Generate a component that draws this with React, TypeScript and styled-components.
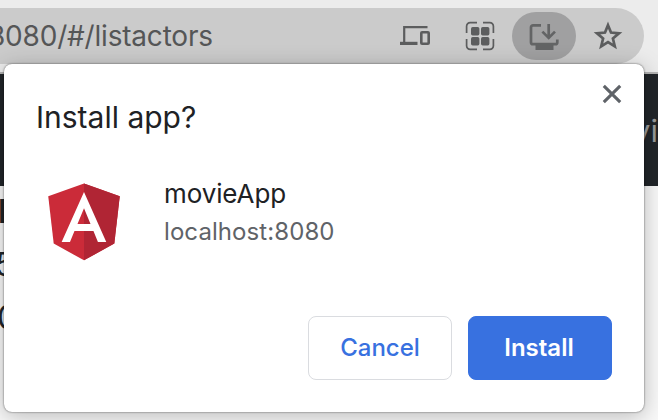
import React from "react";
import styled, { createGlobalStyle } from "styled-components";

const GlobalStyle = createGlobalStyle`
  * { box-sizing: border-box; }
  body { margin: 0; overflow: hidden; font-family: Inter, "Liberation Sans", sans-serif; }
`;

const Screen = styled.div`
  position: relative;
  display: flex;
  flex-direction: column;
  width: 658px;
  height: 420px;
  overflow: hidden;
  background: #f8f8f8;
`;

const Toolbar = styled.header`
  flex: none;
  height: 74px;
  padding: 8px 14px 8px 0;
  background: #ececec;
  border-bottom: 2px solid #b2b2b2;
`;

const AddressBar = styled.div`
  display: flex;
  align-items: center;
  height: 56px;
  padding-right: 4px;
  border-radius: 0 28px 28px 0;
  background: #cbcbcb;
  color: #5c5d5e;
`;

const Url = styled.span`
  flex: 1;
  margin-left: -12px;
  color: #555657;
  font-size: 28px;
  line-height: 57px;
  letter-spacing: -0.2px;
  white-space: nowrap;
`;

const IconSlot = styled.span<{ $width: number; $active?: boolean }>`
  display: flex;
  flex: none;
  align-items: center;
  justify-content: center;
  width: ${(p) => p.$width}px;
  height: 48px;
  border-radius: 24px;
  background: ${(p) => (p.$active ? "#a0a0a1" : "transparent")};
  color: ${(p) => (p.$active ? "#636465" : "inherit")};
`;

const NavBar = styled.nav`
  display: flex;
  flex: none;
  justify-content: flex-end;
  height: 112px;
  background: #212529;
  overflow: hidden;
`;

const NavLink = styled.span`
  width: 71px;
  color: #98999a;
  font-size: 31px;
  line-height: 114px;
  white-space: nowrap;
`;

const Rows = styled.main`
  display: flex;
  flex-direction: column;
  margin-top: -1px;
  color: #212529;
`;

const Row = styled.div<{ $bold?: boolean; $shift: number }>`
  height: 53px;
  margin-left: ${(p) => p.$shift}px;
  font-size: 32px;
  font-weight: ${(p) => (p.$bold ? 700 : 400)};
  line-height: 53px;
`;

const Dialog = styled.section`
  position: absolute;
  top: 64px;
  left: 4px;
  display: flex;
  flex-direction: column;
  width: 640px;
  height: 348px;
  padding: 14px 32px 32px;
  border-radius: 8px;
  background: #fff;
  box-shadow: 0 0 2px rgba(0, 0, 0, 0.65), 0 4px 22px rgba(0, 0, 0, 0.25);
`;

const DialogHeader = styled.div`
  display: flex;
  align-items: flex-start;
  justify-content: space-between;
  height: 94px;
`;

const Title = styled.h1`
  margin: 19px 0 0;
  color: #202124;
  font-size: 30px;
  font-weight: 400;
  line-height: 40px;
  letter-spacing: 0;
`;

const CloseButton = styled.button`
  display: flex;
  margin-right: -10px;
  padding: 6px 0;
  border: 0;
  background: none;
  color: #5f6368;
`;

const AppInfo = styled.div`
  display: flex;
  gap: 32px;
  height: 96px;
`;

const AppText = styled.div`
  padding-top: 3px;
`;

const AppName = styled.div`
  color: #202124;
  font-size: 26px;
  line-height: 38px;
  letter-spacing: -0.1px;
`;

const Origin = styled.div`
  color: #5f6368;
  font-size: 24px;
  line-height: 38px;
  letter-spacing: 0.08px;
`;

const Actions = styled.div`
  display: flex;
  justify-content: flex-end;
  gap: 16px;
  margin-top: auto;
`;

const Button = styled.button<{ $primary?: boolean }>`
  width: 144px;
  height: 64px;
  padding: ${(p) => (p.$primary ? "0 2px 0 0" : "0")};
  border: 1px solid ${(p) => (p.$primary ? "#3871e0" : "#dadce0")};
  border-radius: 8px;
  background: ${(p) => (p.$primary ? "#3871e0" : "#fff")};
  color: ${(p) => (p.$primary ? "#fff" : "#3871e0")};
  font: ${(p) => (p.$primary ? 600 : 500)} 24px/62px Inter, "Liberation Sans", sans-serif;
`;

const DevicesIcon = () => (
  <svg width="30" height="20" viewBox="0 0 30 20" fill="none" stroke="currentColor">
    <path d="M27.5 1.2H4.2V17" strokeWidth="2.2" />
    <path d="M0 17.4H17.5" strokeWidth="3.2" />
    <rect x="21.3" y="6.3" width="7.4" height="11.4" rx="0.8" strokeWidth="2.6" />
  </svg>
);

const GridIcon = () => (
  <svg width="30" height="30" viewBox="0 0 30 30">
    <path
      d="M1.6 12V5.2a3.6 3.6 0 0 1 3.6-3.6H12M18 1.6h6.8a3.6 3.6 0 0 1 3.6 3.6V12M28.4 18v6.8a3.6 3.6 0 0 1-3.6 3.6H18M12 28.4H5.2a3.6 3.6 0 0 1-3.6-3.6V18"
      fill="none"
      stroke="currentColor"
      strokeWidth="1.7"
    />
    <g fill="currentColor">
      <rect x="6" y="6" width="8.4" height="8.4" rx="1.7" />
      <rect x="16" y="6" width="8.4" height="8.4" rx="1.7" />
      <rect x="6" y="16" width="8.4" height="8.4" rx="1.7" />
      <rect x="16" y="16" width="8.4" height="8.4" rx="1.7" />
    </g>
  </svg>
);

const InstallIcon = () => (
  <svg width="30" height="28" viewBox="0 0 30 28" fill="none" stroke="currentColor" strokeWidth="2.7">
    <path d="M12 3.4H4a2 2 0 0 0-2 2V20.2a2 2 0 0 0 2 2H26.3a2 2 0 0 0 2-2V17.5" />
    <path d="M19.7 2V15.5M13.4 9.6l6.3 6.3L26 9.6" />
    <path d="M6.5 22.5h18v5.5H6.5z" fill="currentColor" stroke="none" />
  </svg>
);

const StarIcon = () => (
  <svg width="30" height="30" viewBox="0 0 30 30">
    <path
      d="M15 4.2l3 7.4 8 .7-6.1 5.2 1.9 7.8L15 21.2l-6.8 4.1 1.9-7.8L4 12.3l8-.7z"
      fill="none"
      stroke="currentColor"
      strokeWidth="2.7"
    />
  </svg>
);

const CloseIcon = () => (
  <svg width="20" height="20" viewBox="0 0 20 20">
    <path d="M1.8 1.8l16.4 16.4M18.2 1.8L1.8 18.2" stroke="currentColor" strokeWidth="3.1" />
  </svg>
);

const AngularLogo = () => (
  <svg width="96" height="96" viewBox="0 0 250 250">
    <path fill="#cb2b39" d="M125 30L31.9 63.2l14.2 123.1L125 230l78.9-43.7 14.2-123.1z" />
    <path fill="#b02534" d="M125 30v200l78.9-43.7 14.2-123.1z" />
    <path
      fill="#fff"
      d="M125 52.1L66.8 182.6h21.7l11.7-29.2h49.4l11.7 29.2H183L125 52.1zm17 83.3h-34l17-40.9z"
    />
  </svg>
);

export default function App() {
  return (
    <>
      <GlobalStyle />
      <Screen>
        <Toolbar>
          <AddressBar>
            <Url>8080/#/listactors</Url>
            <IconSlot $width={66}><DevicesIcon /></IconSlot>
            <IconSlot $width={64}><GridIcon /></IconSlot>
            <IconSlot $width={64} $active><InstallIcon /></IconSlot>
            <IconSlot $width={64}><StarIcon /></IconSlot>
          </AddressBar>
        </Toolbar>
        <NavBar><NavLink>Movies</NavLink></NavBar>
        <Rows>
          <Row $bold $shift={-2}>I</Row>
          <Row $shift={-5}>5</Row>
          <Row $shift={-3}>0</Row>
        </Rows>
        <Dialog>
          <DialogHeader>
            <Title>Install app?</Title>
            <CloseButton aria-label="Close"><CloseIcon /></CloseButton>
          </DialogHeader>
          <AppInfo>
            <AngularLogo />
            <AppText>
              <AppName>movieApp</AppName>
              <Origin>localhost:8080</Origin>
            </AppText>
          </AppInfo>
          <Actions>
            <Button>Cancel</Button>
            <Button $primary>Install</Button>
          </Actions>
        </Dialog>
      </Screen>
    </>
  );
}
